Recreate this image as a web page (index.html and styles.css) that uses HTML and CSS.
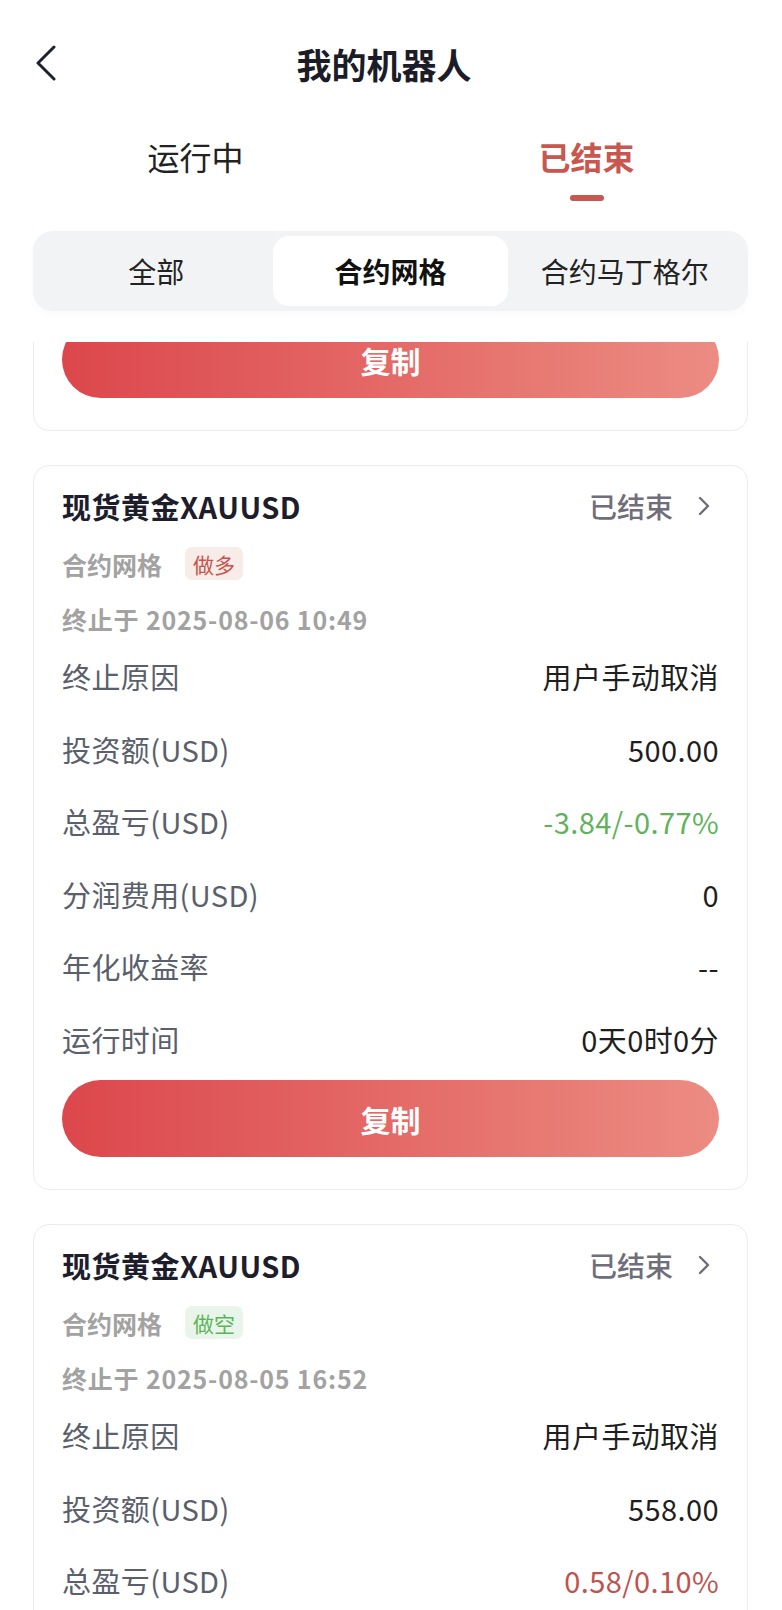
FILE: index.html
```html
<!doctype HTML>
<html>

<head>
  <meta charset="utf-8">
  <title>我的机器人</title>
  <link rel="stylesheet" href="styles.css">
</head>

<body>
  <div class="app">
    <header class="nav">
      <button class="back" aria-label="返回">
        <svg width="24" height="36" viewBox="0 0 24 36">
          <path d="M20 2 L4 18 L20 34" fill="none" stroke="#1e2030" stroke-width="3" stroke-linecap="round" stroke-linejoin="round" />
        </svg>
      </button>
      <h1>我的机器人</h1>
      <span></span>
    </header>

    <nav class="tabs">
      <div class="tab">运行中</div>
      <div class="tab on">已结束</div>
    </nav>

    <div class="seg">
      <div class="seg-item">全部</div>
      <div class="seg-item on">合约网格</div>
      <div class="seg-item">合约马丁格尔</div>
    </div>

    <main class="list">
      <section class="card cut">
        <button class="copy">复制</button>
      </section>

      <section class="card">
        <div class="head">
          <h2>现货黄金XAUUSD</h2>
          <div class="status">已结束
            <svg width="14" height="20" viewBox="0 0 14 20">
              <path d="M3 2 L11 10 L3 18" fill="none" stroke="#6f6e7a" stroke-width="2.4" stroke-linecap="round" stroke-linejoin="round" />
            </svg>
          </div>
        </div>
        <div class="meta">合约网格 <span class="tag long">做多</span></div>
        <div class="date">终止于 2025-08-06 10:49</div>
        <div class="rows">
          <div class="row"><span>终止原因</span><b>用户手动取消</b></div>
          <div class="row"><span>投资额(USD)</span><b>500.00</b></div>
          <div class="row"><span>总盈亏(USD)</span><b class="down">-3.84/-0.77%</b></div>
          <div class="row"><span>分润费用(USD)</span><b>0</b></div>
          <div class="row"><span>年化收益率</span><b>--</b></div>
          <div class="row"><span>运行时间</span><b>0天0时0分</b></div>
        </div>
        <button class="copy">复制</button>
      </section>

      <section class="card">
        <div class="head">
          <h2>现货黄金XAUUSD</h2>
          <div class="status">已结束
            <svg width="14" height="20" viewBox="0 0 14 20">
              <path d="M3 2 L11 10 L3 18" fill="none" stroke="#6f6e7a" stroke-width="2.4" stroke-linecap="round" stroke-linejoin="round" />
            </svg>
          </div>
        </div>
        <div class="meta">合约网格 <span class="tag short">做空</span></div>
        <div class="date">终止于 2025-08-05 16:52</div>
        <div class="rows">
          <div class="row"><span>终止原因</span><b>用户手动取消</b></div>
          <div class="row"><span>投资额(USD)</span><b>558.00</b></div>
          <div class="row"><span>总盈亏(USD)</span><b class="up">0.58/0.10%</b></div>
        </div>
      </section>
    </main>
  </div>
</body>

</html>
```

FILE: styles.css
```css
*,
*::before,
*::after {
  box-sizing: border-box;
}

html {
  font-family: "Noto Sans CJK SC", "Noto Sans", sans-serif;
  color: #1f1f24;
}

body {
  margin: 0;
  background: #fff;
}

button {
  font-family: inherit;
  border: none;
  background: none;
  padding: 0;
  cursor: pointer;
}

.app {
  height: 100vh;
  display: flex;
  flex-direction: column;
  overflow: hidden;
}

/* top bar */
.nav {
  height: 126px;
  display: grid;
  grid-template-columns: 60px 1fr 60px;
  align-items: center;
  padding: 0 48px 0 34px;
}

.back {
  display: flex;
  align-items: center;
  width: 40px;
  height: 40px;
}

.nav h1 {
  margin: 0;
  text-align: center;
  font-size: 35px;
  font-weight: 700;
  color: #1c1c28;
}

/* running / finished */
.tabs {
  display: grid;
  grid-template-columns: 1fr 1fr;
  padding-top: 8px;
}

.tab {
  display: flex;
  flex-direction: column;
  align-items: center;
  font-size: 32px;
  line-height: 44px;
  color: #222;
}

.tab::after {
  content: "";
  width: 34px;
  height: 6px;
  margin-top: 17px;
  border-radius: 3px;
}

.tab.on {
  color: #c7574f;
  font-weight: 700;
}

.tab.on::after {
  background: #c7574f;
}

/* segmented filter */
.seg {
  margin: 30px 34px 0 33px;
  height: 80px;
  padding: 5px 6px;
  display: grid;
  grid-template-columns: 1fr 1fr 1fr;
  background: #f2f3f5;
  border-radius: 20px;
  box-shadow: 0 3px 8px rgba(0, 0, 0, 0.025);
}

.seg-item {
  display: flex;
  align-items: center;
  justify-content: center;
  font-size: 28px;
  color: #222;
  border-radius: 16px;
}

.seg-item.on {
  background: #fff;
  font-weight: 700;
  color: #111;
}

/* cards */
.list {
  flex: 1;
  margin-top: 31px;
  padding: 0 34px 0 33px;
  overflow: hidden;
  display: flex;
  flex-direction: column;
  gap: 34px;
}

.card {
  flex-shrink: 0;
  background: #fff;
  border: 1px solid #ececec;
  border-radius: 16px;
  padding: 20px 28px 32px;
}

.card.cut {
  margin-top: -22px;
  padding-top: 0;
}

.head {
  height: 40px;
  display: flex;
  justify-content: space-between;
  align-items: center;
}

.head h2 {
  margin: 0;
  font-size: 29px;
  line-height: 40px;
  font-weight: 700;
  letter-spacing: 0.5px;
  color: #1d1d2b;
}

.status {
  display: flex;
  align-items: center;
  font-size: 28px;
  font-weight: 500;
  color: #6f6e7a;
}

.status svg {
  margin-left: 24px;
  margin-right: 8px;
}

.meta {
  margin-top: 21px;
  height: 33px;
  display: flex;
  align-items: center;
  gap: 23px;
  font-size: 25px;
  font-weight: 700;
  color: #a2a2a2;
}

.tag {
  height: 33px;
  padding: 0 8px;
  border-radius: 7px;
  display: flex;
  align-items: center;
  font-size: 21px;
  font-weight: 400;
}

.tag.long {
  background: #f8ece9;
  color: #c9534c;
}

.tag.short {
  background: #e9f5ea;
  color: #5db55a;
}

.date {
  margin-top: 21px;
  font-size: 25px;
  line-height: 36px;
  font-weight: 700;
  letter-spacing: 0.8px;
  color: #a2a2a2;
}

.rows {
  margin-top: 3px;
}

.row {
  height: 72.5px;
  display: flex;
  justify-content: space-between;
  align-items: center;
  font-size: 29px;
  letter-spacing: 0.4px;
}

.row span {
  color: #5a606b;
}

.row b {
  font-weight: 400;
  color: #1f1f1f;
}

.row b.down {
  color: #5fb35b;
}

.row b.up {
  color: #c0534f;
}

.copy {
  display: block;
  width: 100%;
  height: 77px;
  margin-top: 5px;
  border-radius: 39px;
  background: linear-gradient(90deg, #dc474c, #ec8c82);
  color: #fff;
  font-size: 30px;
  font-weight: 700;
}

.card.cut .copy {
  margin-top: 0;
}
```
